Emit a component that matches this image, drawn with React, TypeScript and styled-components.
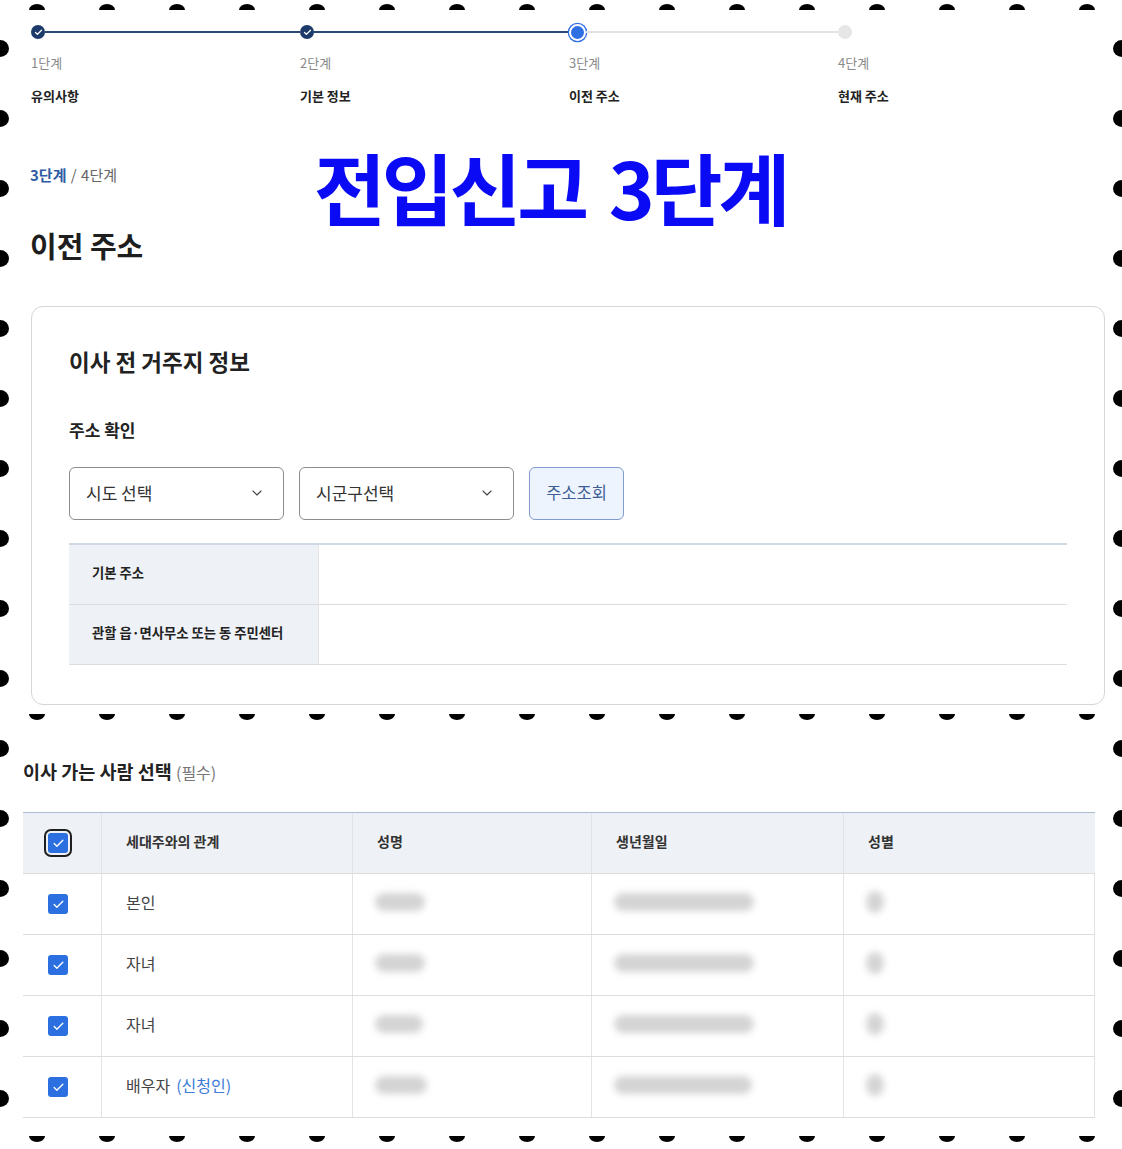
import React from 'react'
import styled, { createGlobalStyle } from 'styled-components'
import { Check, ChevronDown } from 'lucide-react'

const GlobalStyle = createGlobalStyle`
  html, body {
    margin: 0;
    padding: 0;
    background: #fff;
  }
  body {
    font-family: "Noto Sans CJK KR", "Noto Sans", sans-serif;
    color: #222;
  }
  * { box-sizing: border-box; }
`

const Page = styled.div`
  position: relative;
  width: 1122px;
  height: 1149px;
  overflow: hidden;
  background: #fff;
  padding: 23px 0 0 31px;
`

// perforated edge decoration
const Hole = styled.span<{ $side: 'top' | 'bottom' | 'left' | 'right' }>`
  position: absolute;
  background: #000;
  width: ${p => (p.$side === 'left' || p.$side === 'right' ? '9px' : '16px')};
  height: ${p => (p.$side === 'left' || p.$side === 'right' ? '17px' : '6px')};
  border-radius: ${p =>
    p.$side === 'top'
      ? '8px 8px 0 0 / 6px 6px 0 0'
      : p.$side === 'bottom'
      ? '0 0 8px 8px / 0 0 6px 6px'
      : p.$side === 'left'
      ? '0 9px 9px 0 / 0 8.5px 8.5px 0'
      : '9px 0 0 9px / 8.5px 0 0 8.5px'};
`

const Steps = styled.ol`
  list-style: none;
  margin: 0;
  padding: 0;
  display: grid;
  grid-template-columns: repeat(4, 269px);
`

const Step = styled.li`
  display: flex;
  flex-direction: column;
`

const Track = styled.div`
  display: flex;
  align-items: center;
  height: 18px;
`

const Dot = styled.span<{ $state: 'done' | 'current' | 'todo' }>`
  flex: none;
  display: flex;
  align-items: center;
  justify-content: center;
  border-radius: 50%;
  width: ${p => (p.$state === 'current' ? '17px' : '14px')};
  height: ${p => (p.$state === 'current' ? '17px' : '14px')};
  background: ${p => (p.$state === 'done' ? '#1c3b6a' : p.$state === 'current' ? '#2f6fe4' : '#e6e6e6')};
  border: ${p => (p.$state === 'current' ? '2.5px solid #fff' : 'none')};
  box-shadow: ${p => (p.$state === 'current' ? '0 0 0 1.3px #2f6fe4' : 'none')};
  color: #fff;
`

const Line = styled.span<{ $done: boolean }>`
  flex: 1;
  height: ${p => (p.$done ? '1.5px' : '2px')};
  background: ${p => (p.$done ? '#2a4775' : '#e2e2e2')};
`

const StepNo = styled.span`
  margin-top: 12px;
  font-size: 13px;
  line-height: 20px;
  color: #8a8a8a;
`

const StepName = styled.span`
  margin-top: 13px;
  font-size: 13px;
  line-height: 20px;
  font-weight: 700;
  color: #222;
`

const Progress = styled.p`
  margin: 59px 0 0 -1px;
  font-size: 15px;
  line-height: 20px;
  color: #666;
  word-spacing: 1px;
  b {
    color: #2f5ba3;
    font-weight: 700;
  }
`

const Heading = styled.h2`
  margin: 41px 0 0 -1px;
  font-size: 29px;
  line-height: 38px;
  font-weight: 700;
  color: #1e1e1e;
`

const Stamp = styled.div`
  position: absolute;
  left: 314px;
  top: 147px;
  font-size: 78px;
  line-height: 78px;
  font-weight: 700;
  letter-spacing: -4px;
  word-spacing: 10px;
  color: #0a0af5;
  white-space: nowrap;
`

const Card = styled.section`
  margin-top: 42px;
  width: 1074px;
  border: 1px solid #d6d6d6;
  border-radius: 12px;
  padding: 39px 37px 39px 37px;
`

const CardTitle = styled.h3`
  margin: 0;
  font-size: 22.5px;
  line-height: 30px;
  font-weight: 700;
  color: #222;
`

const FieldLabel = styled.h4`
  margin: 42px 0 0;
  font-size: 17px;
  line-height: 24px;
  font-weight: 700;
  color: #222;
`

const Controls = styled.div`
  margin-top: 25px;
  display: flex;
  gap: 15px;
  height: 53px;
`

const Select = styled.div`
  width: 215px;
  height: 53px;
  display: flex;
  align-items: center;
  justify-content: space-between;
  padding: 0 18px 2px 16px;
  border: 1px solid #8c8c8c;
  border-radius: 6px;
  font-size: 17px;
  color: #333;
`

const LookupButton = styled.button`
  width: 95px;
  height: 53px;
  border: 1px solid #7f9dcd;
  border-radius: 6px;
  background: #eef4fd;
  color: #3d5f96;
  font-family: inherit;
  font-size: 16.5px;
  padding: 0 0 3px;
`

const InfoTable = styled.div`
  margin-top: 23px;
  border-top: 2px solid #cfd8e3;
`

const InfoRow = styled.div`
  display: grid;
  grid-template-columns: 249px 1fr;
  height: 60px;
  border-bottom: 1px solid #dcdcdc;
`

const InfoLabel = styled.div`
  display: flex;
  align-items: center;
  padding: 0 0 4px 23px;
  background: #eef1f5;
  font-size: 13.3px;
  font-weight: 700;
  color: #222;
`

const InfoValue = styled.div`
  border-left: 1px solid #e3e3e3;
`

const SectionTitle = styled.h3`
  margin: 53px 0 0 -8px;
  font-size: 18.5px;
  line-height: 26px;
  font-weight: 700;
  color: #222;
  small {
    font-size: 16px;
    font-weight: 400;
    color: #777;
  }
`

const People = styled.div`
  margin: 27px 0 0 -8px;
  width: 1072px;
  border-top: 1px solid #aebbd0;
`

const PeopleRow = styled.div<{ $head?: boolean }>`
  display: grid;
  grid-template-columns: 78px 251px 239px 252px 252px;
  height: 61px;
  background: ${p => (p.$head ? '#eef1f5' : '#fff')};
  border-bottom: 1px solid #dddddd;
  border-right: ${p => (p.$head ? 'none' : '1px solid #e3e3e3')};
`

const Cell = styled.div<{ $head?: boolean; $box?: boolean }>`
  display: flex;
  align-items: center;
  padding: 0 0 ${p => (p.$box ? '0' : '4px')} ${p => (p.$box ? '25px' : '24px')};
  border-left: 1px solid ${p => (p.$head ? '#dfe4ea' : '#e3e3e3')};
  &:first-child {
    border-left: none;
  }
  font-size: ${p => (p.$head ? '14px' : '16px')};
  font-weight: ${p => (p.$head ? 700 : 400)};
  color: ${p => (p.$head ? '#333' : '#444')};
`

const Applicant = styled.span`
  margin-left: 6px;
  color: #3d7bd6;
`

const Box = styled.span<{ $focus?: boolean }>`
  width: 20px;
  height: 20px;
  border-radius: 3px;
  background: #2b6fe0;
  color: #fff;
  display: flex;
  align-items: center;
  justify-content: center;
  outline: ${p => (p.$focus ? '2px solid #1f1f1f' : 'none')};
  outline-offset: 2px;
`

const Blur = styled.span<{ $w: number; $round?: boolean }>`
  display: block;
  margin-left: -2px;
  width: ${p => p.$w}px;
  height: ${p => (p.$round ? 22 : 18)}px;
  border-radius: ${p => (p.$round ? '50%' : '9px')};
  background: #d4d4d4;
  filter: blur(3.5px);
`

const steps = [
  { no: '1단계', name: '유의사항', state: 'done' as const },
  { no: '2단계', name: '기본 정보', state: 'done' as const },
  { no: '3단계', name: '이전 주소', state: 'current' as const },
  { no: '4단계', name: '현재 주소', state: 'todo' as const },
]

const people = [
  { rel: '본인', name: 50, birth: 140 },
  { rel: '자녀', name: 50, birth: 140 },
  { rel: '자녀', name: 48, birth: 140 },
  { rel: '배우자', name: 52, birth: 138, applicant: true },
]

const holeX = Array.from({ length: 16 }, (_, i) => 29 + i * 70)
const holeY = Array.from({ length: 16 }, (_, i) => 40 + i * 70)

function Perforation() {
  return (
    <>
      {holeX.map(x => (
        <React.Fragment key={x}>
          <Hole $side="top" style={{ left: x, top: 4 }} />
          <Hole $side="bottom" style={{ left: x, top: 714 }} />
          <Hole $side="bottom" style={{ left: x, top: 1136 }} />
        </React.Fragment>
      ))}
      {holeY.map(y => (
        <React.Fragment key={y}>
          <Hole $side="left" style={{ left: 0, top: y }} />
          <Hole $side="right" style={{ left: 1113, top: y }} />
        </React.Fragment>
      ))}
    </>
  )
}

export default function App() {
  return (
    <>
      <GlobalStyle />
      <Page>
        <Steps>
          {steps.map((s, i) => (
            <Step key={s.no}>
              <Track>
                <Dot $state={s.state}>{s.state === 'done' && <Check size={9} strokeWidth={3.5} />}</Dot>
                {i < steps.length - 1 && <Line $done={s.state === 'done'} />}
              </Track>
              <StepNo>{s.no}</StepNo>
              <StepName>{s.name}</StepName>
            </Step>
          ))}
        </Steps>

        <Progress>
          <b>3단계</b> / 4단계
        </Progress>
        <Heading>이전 주소</Heading>
        <Stamp>전입신고 3단계</Stamp>

        <Card>
          <CardTitle>이사 전 거주지 정보</CardTitle>
          <FieldLabel>주소 확인</FieldLabel>
          <Controls>
            <Select>
              시도 선택
              <ChevronDown size={16} strokeWidth={1.6} color="#444" />
            </Select>
            <Select>
              시군구선택
              <ChevronDown size={16} strokeWidth={1.6} color="#444" />
            </Select>
            <LookupButton>주소조회</LookupButton>
          </Controls>
          <InfoTable>
            <InfoRow>
              <InfoLabel>기본 주소</InfoLabel>
              <InfoValue />
            </InfoRow>
            <InfoRow>
              <InfoLabel>관할 읍·면사무소 또는 동 주민센터</InfoLabel>
              <InfoValue />
            </InfoRow>
          </InfoTable>
        </Card>

        <SectionTitle>
          이사 가는 사람 선택 <small>(필수)</small>
        </SectionTitle>
        <People>
          <PeopleRow $head>
            <Cell $head $box>
              <Box $focus>
                <Check size={13} strokeWidth={2.5} />
              </Box>
            </Cell>
            <Cell $head>세대주와의 관계</Cell>
            <Cell $head>성명</Cell>
            <Cell $head>생년월일</Cell>
            <Cell $head>성별</Cell>
          </PeopleRow>
          {people.map((p, i) => (
            <PeopleRow key={i}>
              <Cell $box>
                <Box>
                  <Check size={13} strokeWidth={2.5} />
                </Box>
              </Cell>
              <Cell>
                {p.rel}
                {p.applicant && <Applicant>(신청인)</Applicant>}
              </Cell>
              <Cell>
                <Blur $w={p.name} />
              </Cell>
              <Cell>
                <Blur $w={p.birth} />
              </Cell>
              <Cell>
                <Blur $w={18} $round />
              </Cell>
            </PeopleRow>
          ))}
        </People>
        <Perforation />
      </Page>
    </>
  )
}
